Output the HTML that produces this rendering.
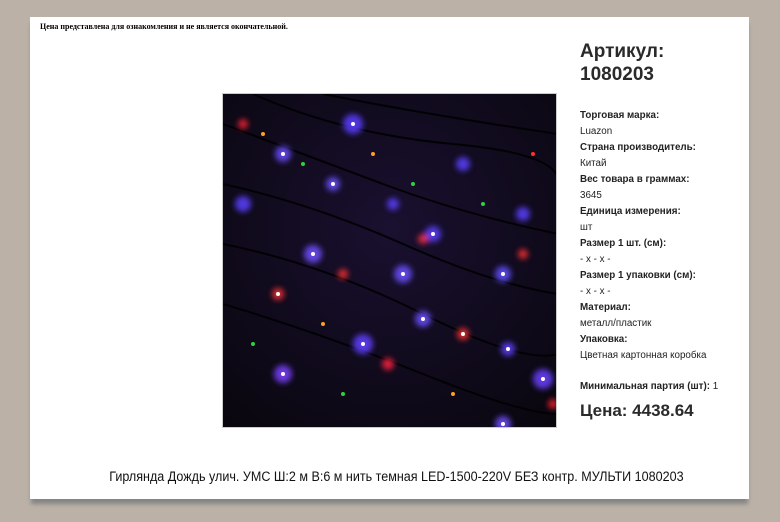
<!DOCTYPE html>
<html><head><meta charset="utf-8"><style>
body{margin:0;width:780px;height:522px;background:#bbb1a7;position:relative;overflow:hidden;font-family:"Liberation Sans",Arial,sans-serif;color:#222}
.card{position:absolute;left:30px;top:17px;width:719px;height:482px;background:#fff;box-shadow:0 6px 4px -1px #858585}
.note{position:absolute;left:40px;top:22px;font-family:"Liberation Serif",serif;font-size:8px;font-weight:bold;color:#000}
.art{position:absolute;left:580px;top:40px;font-size:19px;font-weight:bold;line-height:23px;color:#2a2a2a}
.p{position:absolute;left:580px;font-size:9.8px;line-height:12px;white-space:nowrap}
.b{font-weight:bold}
.price{position:absolute;left:580px;top:401px;font-size:17px;font-weight:bold;color:#2a2a2a}
.title{position:absolute;left:6px;width:780px;top:469px;text-align:center;font-size:13.5px;color:#111;transform:scaleX(0.93);transform-origin:396px 0}
.img{position:absolute;left:222px;top:93px;width:335px;height:335px;background:#120a1c;border:1px solid #ccc;box-sizing:border-box;overflow:hidden}
</style></head><body>
<div class="card"></div>
<div class="note">Цена представлена для ознакомления и не является окончательной.</div>
<div class="img">
<svg width="335" height="335" viewBox="0 0 335 335">
<defs><filter id="bl"><feGaussianBlur stdDeviation="3"/></filter>
<radialGradient id="bg" cx="0.5" cy="0.4" r="0.8"><stop offset="0" stop-color="#1a1030"/><stop offset="1" stop-color="#08060c"/></radialGradient></defs>
<rect width="335" height="335" fill="url(#bg)"/>
<g stroke="#020204" stroke-width="2" fill="none">
<path d="M0 30 Q80 60 160 90 T335 140"/><path d="M0 90 Q90 110 180 150 T335 200"/><path d="M0 150 Q100 170 200 220 T335 260"/><path d="M0 210 Q100 240 200 280 T335 320"/><path d="M30 0 Q120 40 230 50 T335 90"/><path d="M100 0 Q200 20 335 40"/>
</g>
<g filter="url(#bl)" opacity="0.85">
<circle cx="60" cy="60" r="8" fill="#6a4cff"/><circle cx="130" cy="30" r="10" fill="#5a3cff"/><circle cx="110" cy="90" r="7" fill="#6b50ff"/><circle cx="210" cy="140" r="8" fill="#5a40ff"/><circle cx="180" cy="180" r="9" fill="#6a50ff"/><circle cx="90" cy="160" r="9" fill="#7050ff"/><circle cx="140" cy="250" r="10" fill="#6040ff"/><circle cx="60" cy="280" r="9" fill="#7a40ff"/><circle cx="200" cy="225" r="8" fill="#6a50ff"/><circle cx="280" cy="180" r="8" fill="#6050ff"/><circle cx="285" cy="255" r="7" fill="#6040ff"/><circle cx="320" cy="285" r="10" fill="#6a40ff"/><circle cx="280" cy="330" r="8" fill="#7050ff"/><circle cx="240" cy="70" r="7" fill="#5a40ff"/><circle cx="20" cy="110" r="8" fill="#5a40ff"/><circle cx="170" cy="110" r="6" fill="#5a40ff"/><circle cx="300" cy="120" r="7" fill="#5a40ff"/>
<circle cx="55" cy="200" r="6" fill="#ff3030"/><circle cx="200" cy="145" r="5" fill="#ff3040"/><circle cx="240" cy="240" r="6" fill="#ff3030"/><circle cx="165" cy="270" r="6" fill="#ff2040"/><circle cx="20" cy="30" r="5" fill="#ff2030"/><circle cx="300" cy="160" r="5" fill="#ff3030"/><circle cx="120" cy="180" r="5" fill="#ff3030"/><circle cx="330" cy="310" r="5" fill="#ff2030"/>
</g>
<g fill="#fff">
<circle cx="60" cy="60" r="2"/><circle cx="130" cy="30" r="2"/><circle cx="110" cy="90" r="2"/><circle cx="210" cy="140" r="2"/><circle cx="180" cy="180" r="2"/><circle cx="90" cy="160" r="2"/><circle cx="140" cy="250" r="2"/><circle cx="60" cy="280" r="2"/><circle cx="200" cy="225" r="2"/><circle cx="280" cy="180" r="2"/><circle cx="285" cy="255" r="2"/><circle cx="320" cy="285" r="2"/><circle cx="280" cy="330" r="2"/><circle cx="55" cy="200" r="2"/><circle cx="240" cy="240" r="2"/>
</g>
<g>
<circle cx="40" cy="40" r="2" fill="#ffa020"/><circle cx="80" cy="70" r="2" fill="#30d040"/><circle cx="150" cy="60" r="2" fill="#ffa020"/><circle cx="260" cy="110" r="2" fill="#30d040"/><circle cx="100" cy="230" r="2" fill="#ffa020"/><circle cx="230" cy="300" r="2" fill="#ffa020"/><circle cx="30" cy="250" r="2" fill="#30d040"/><circle cx="190" cy="90" r="2" fill="#30d040"/><circle cx="310" cy="60" r="2" fill="#ff3030"/><circle cx="120" cy="300" r="2" fill="#30d040"/>
</g>
</svg></div>
<div class="art">Артикул:<br>1080203</div>
<div class="p b" style="top:110px">Торговая марка:</div>
<div class="p" style="top:126px">Luazon</div>
<div class="p b" style="top:142px">Страна производитель:</div>
<div class="p" style="top:158px">Китай</div>
<div class="p b" style="top:174px">Вес товара в граммах:</div>
<div class="p" style="top:190px">3645</div>
<div class="p b" style="top:206px">Единица измерения:</div>
<div class="p" style="top:222px">шт</div>
<div class="p b" style="top:238px">Размер 1 шт. (см):</div>
<div class="p" style="top:254px">- x - x -</div>
<div class="p b" style="top:270px">Размер 1 упаковки (см):</div>
<div class="p" style="top:286px">- x - x -</div>
<div class="p b" style="top:302px">Материал:</div>
<div class="p" style="top:318px">металл/пластик</div>
<div class="p b" style="top:334px">Упаковка:</div>
<div class="p" style="top:350px">Цветная картонная коробка</div>
<div class="p" style="top:381px"><span class="b">Минимальная партия (шт):</span> 1</div>
<div class="price">Цена: 4438.64</div>
<div class="title">Гирлянда Дождь улич. УМС Ш:2 м В:6 м нить темная LED-1500-220V БЕЗ контр. МУЛЬТИ 1080203</div>
</body></html>
